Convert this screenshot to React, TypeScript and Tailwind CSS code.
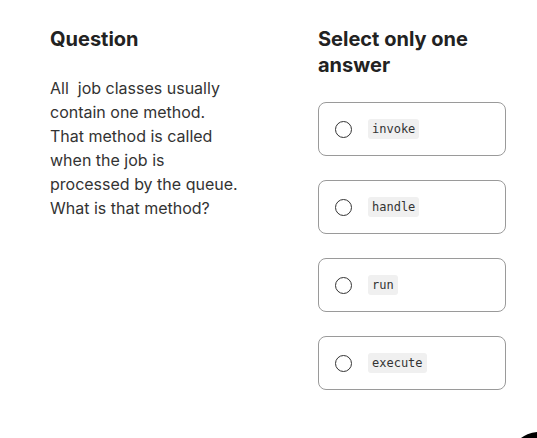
const options = ['invoke', 'handle', 'run', 'execute'];

export default function App() {
  return (
    <main
      className="relative h-[438px] w-[537px] overflow-hidden bg-white text-[#222]"
      style={{ fontFamily: 'Inter, "Noto Sans", sans-serif' }}
    >
      <div className="flex gap-[80px] pl-[50px] pt-[26px]">
        {/* Question */}
        <section className="w-[188px]">
          <h2 className="text-[20px] font-bold leading-[26px]">Question</h2>
          <p className="mt-[24px] text-[16px] leading-[24px] text-[#333]">
            All&nbsp; job classes usually contain one method. That method is called when the job is
            processed by the queue. What is that method?
          </p>
        </section>

        {/* Answers */}
        <section className="w-[188px]">
          <h2 className="text-[20px] font-bold leading-[26px]">Select only one answer</h2>
          <div className="mt-[24px] flex flex-col gap-[24px]">
            {options.map((opt) => (
              <label
                key={opt}
                className="flex h-[54px] items-center gap-[16px] rounded-[8px] border border-[#9a9a9a] pl-[16px]"
              >
                <span className="h-[17px] w-[17px] rounded-full border-[1.5px] border-[#333]" />
                <code
                  className="rounded-[3px] bg-[#f0f0f0] px-[4px] py-[2px] text-[12px] leading-[16px] text-[#333]"
                  style={{ fontFamily: '"DejaVu Sans Mono", monospace' }}
                >
                  {opt}
                </code>
              </label>
            ))}
          </div>
        </section>
      </div>

      {/* floating button peeking in */}
      <div className="absolute left-[509px] top-[432px] h-[60px] w-[60px] rounded-full bg-black" />
    </main>
  );
}
